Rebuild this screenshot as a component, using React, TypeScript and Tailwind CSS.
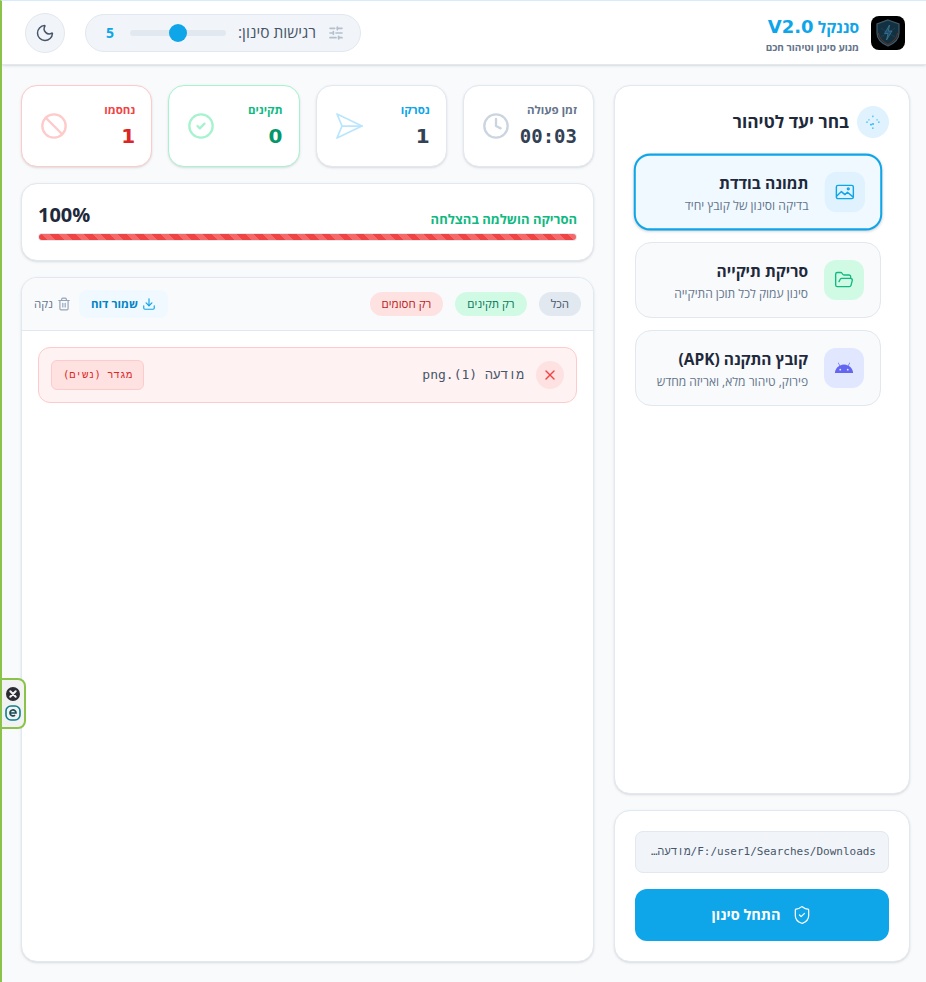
import React from "react";
import { Moon, SlidersHorizontal, FolderOpen, Clock, CircleCheck, Ban, Download, Trash2, X, ShieldCheck } from "lucide-react";

function Sparkle() {
  return (
    <svg width="16" height="16" viewBox="0 0 16 16" fill="#38bdf8">
      <rect x="7" y="1.6" width="1.6" height="1.6" opacity=".8" />
      <rect x="3" y="5.4" width="1.8" height="1" opacity=".8" />
      <rect x="11.2" y="5.4" width="1.8" height="1" opacity=".8" />
      <rect x="1.2" y="7.4" width="1.6" height="1.6" opacity=".8" />
      <rect x="13" y="7.4" width="1.6" height="1.6" opacity=".8" />
      <rect x="5" y="9.8" width="2" height="1.6" />
      <rect x="7" y="9.2" width="2" height="1.6" />
      <rect x="7" y="13.4" width="1.6" height="1.6" opacity=".8" />
    </svg>
  );
}

function Landscape() {
  return (
    <svg width="20" height="20" viewBox="0 0 20 20" fill="none" stroke="#0ea5e9" strokeWidth="1.4" strokeLinejoin="round" strokeLinecap="round">
      <rect x="1.6" y="3.4" width="16.8" height="13.2" rx="1.6" />
      <path d="M2 14l4.6-4.4 3.4 3 2.6-2.4 5.4 4.6" />
      <circle cx="13.4" cy="6.8" r="0.9" />
    </svg>
  );
}

function Android() {
  return (
    <svg width="20" height="20" viewBox="0 0 24 24" fill="#6366f1">
      <path d="M1 18a11 11 0 0 1 5.6-8.6L4.7 6.1a.4.4 0 0 1 .7-.4l1.9 3.3a11.4 11.4 0 0 1 9.4 0l1.9-3.3a.4.4 0 0 1 .7.4l-1.9 3.3A11 11 0 0 1 23 18H1z" />
      <circle cx="7.5" cy="14" r="1.1" fill="#e0e7ff" />
      <circle cx="16.5" cy="14" r="1.1" fill="#e0e7ff" />
    </svg>
  );
}

function Plane() {
  return (
    <svg width="28" height="28" viewBox="0 0 28 28" fill="none" stroke="#bae6fd" strokeWidth="1.75" strokeLinejoin="round" strokeLinecap="round">
      <path d="M2 2 L27 14 L2 26 L7 14 Z" />
      <path d="M7 14 H27" />
    </svg>
  );
}

function Logo() {
  return (
    <div className="w-[34px] h-[34px] rounded-lg bg-black flex items-center justify-center shrink-0">
      <svg width="26" height="28" viewBox="0 0 26 28">
        <path d="M13 1 L24 5 V14 C24 20 19 24.5 13 27 C7 24.5 2 20 2 14 V5 Z" fill="#12303f" stroke="#3d5a6c" strokeWidth="1.2" />
        <path d="M3.5 14 C4 19 8 23 13 25.5 C18 23 22 19 22.5 14" fill="none" stroke="#6b3526" strokeWidth="1" />
        <path d="M6 9l5 4M20 9l-5 4M6 18l5-3M20 18l-5-3" stroke="#24495c" strokeWidth=".6" fill="none" />
        <path d="M14.5 6 L9.5 14.5 H13 L11.5 21 L17 12 H13.5 Z" fill="#1d4f6e" stroke="#4a87a8" strokeWidth=".6" />
      </svg>
    </div>
  );
}

function Stat({ label, value, labelCls, valueCls, border, icon }: { label: string; value: React.ReactNode; labelCls: string; valueCls: string; border: string; icon: React.ReactNode }) {
  return (
    <div className={`flex-1 min-w-0 h-[82px] bg-white rounded-2xl border ${border} shadow-sm pr-4 pl-[18px] flex items-center justify-between`}>
      <div className="flex flex-col items-start">
        <div className={`text-[11.5px] font-bold leading-4 ${labelCls}`}>{label}</div>
        <div className={`font-bold leading-7 mt-1 ${valueCls}`}>{value}</div>
      </div>
      {icon}
    </div>
  );
}

function Mode({ title, desc, iconBg, icon, active }: { title: string; desc: string; iconBg: string; icon: React.ReactNode; active?: boolean }) {
  return (
    <div className={`h-[76px] rounded-2xl flex items-center gap-4 ${active ? "border-2 border-[#0ea5e9] bg-[#f0f9ff] shadow-sm scale-[1.01] px-[15px]" : "border border-[#e2e8f0] bg-[#f8fafc] px-4"}`}>
      <div className={`w-10 h-10 rounded-xl flex items-center justify-center shrink-0 ${iconBg}`}>{icon}</div>
      <div className="min-w-0">
        <div className="text-[15.5px] font-bold leading-[26px] text-[#1e293b]">{title}</div>
        <div className="text-xs leading-4 mt-0.5 text-[#64748b] whitespace-nowrap">{desc}</div>
      </div>
    </div>
  );
}

const mono = "font-['DejaVu_Sans_Mono','Liberation_Mono',monospace]";
const dejavu = "font-['DejaVu_Sans',sans-serif]";

export default function App() {
  return (
    <div dir="rtl" className="relative w-[926px] h-[982px] overflow-hidden bg-[#f8fafc] border-l-2 border-l-[#8bc34a] border-t border-t-[#d7ecfa] font-['Open_Sans','Liberation_Sans',sans-serif] flex flex-col">
      <header className="h-[64px] shrink-0 bg-white border-b border-[#e2e8f0] shadow-sm flex items-center justify-between pr-[21px] pl-[23px]">
        <div className="flex items-center gap-3">
          <Logo />
          <div>
            <div className="leading-[26px] text-[#0ea5e9] whitespace-nowrap">
              <span className="text-[15.5px] font-bold">סננקל</span> <span className={`text-lg font-bold ${dejavu}`}>V2.0</span>
            </div>
            <div className="text-[10px] font-bold leading-3 text-[#64748b]">מנוע סינון וטיהור חכם</div>
          </div>
        </div>
        <div className="flex items-center gap-5">
          <div className="w-[276px] h-[38px] rounded-full bg-[#f1f5f9] border border-[#e2e8f0] flex items-center pr-[16px] pl-[20px]">
            <SlidersHorizontal size={16} strokeWidth={2.5} className="text-[#b4bfce] shrink-0" />
            <span className="text-[15.5px] font-medium text-[#475569] mr-3">רגישות סינון:</span>
            <div className="w-24 h-1.5 rounded-full bg-[#e2e8f0] mr-[12px] relative shrink-0">
              <div className="absolute left-[39px] -top-1.5 w-[18px] h-[18px] rounded-full bg-[#0ea5e9]" />
            </div>
            <span className="text-sm font-bold text-[#0ea5e9] mr-auto">5</span>
          </div>
          <button className="w-10 h-10 rounded-full bg-[#f1f5f9] border border-[#e2e8f0] flex items-center justify-center">
            <Moon size={20} strokeWidth={1.75} className="text-[#475569]" />
          </button>
        </div>
      </header>

      <main className="flex-1 min-h-0 flex gap-5 pt-5 pb-5 pr-4 pl-[19px]">
        <aside className="w-[296px] shrink-0 flex flex-col gap-4">
          <section className="flex-1 bg-white rounded-2xl border border-[#e2e8f0] shadow-sm pt-5 px-5">
            <div className="flex items-center gap-2 h-8">
              <div className="w-8 h-8 rounded-full bg-[#e0f2fe] flex items-center justify-center"><Sparkle /></div>
              <h2 className="text-[17.3px] font-bold text-[#1e293b]">בחר יעד לטיהור</h2>
            </div>
            <div className="flex flex-col gap-3 mt-4 pr-2">
              <Mode active title="תמונה בודדת" desc="בדיקה וסינון של קובץ יחיד" iconBg="bg-[#e0f2fe]" icon={<Landscape />} />
              <Mode title="סריקת תיקייה" desc="סינון עמוק לכל תוכן התיקייה" iconBg="bg-[#d1fae5]" icon={<FolderOpen size={20} strokeWidth={1.6} className="text-[#10b981]" />} />
              <Mode title="קובץ התקנה (APK)" desc="פירוק, טיהור מלא, ואריזה מחדש" iconBg="bg-[#e0e7ff]" icon={<Android />} />
            </div>
          </section>
          <section className="h-[152px] shrink-0 bg-white rounded-2xl border border-[#e2e8f0] shadow-sm p-5 flex flex-col gap-4">
            <div dir="ltr" className={`h-[42px] rounded-lg bg-[#f1f5f9] border border-[#e2e8f0] flex items-center justify-end px-3 text-[11px] text-[#475569] whitespace-nowrap overflow-hidden ${mono}`}>
              <span>…מודעה/F:/user1/Searches/Downloads</span>
            </div>
            <button className="h-[52px] rounded-xl bg-[#0ea5e9] text-white font-bold text-[14.5px] flex items-center justify-center gap-3">
              <ShieldCheck size={20} strokeWidth={1.5} />
              <span>התחל סינון</span>
            </button>
          </section>
        </aside>

        <div className="flex-1 min-w-0 flex flex-col gap-4">
          <div className="flex gap-4">
            <Stat label="זמן פעולה" value={<span className={`text-[19px] ${mono}`}>00:03</span>} labelCls="text-[#64748b]" valueCls="text-[#334155]" border="border-[#e2e8f0]" icon={<Clock size={28} className="text-[#cbd5e1]" />} />
            <Stat label="נסרקו" value={<span className={`text-xl ${dejavu}`}>1</span>} labelCls="text-[#0ea5e9]" valueCls="text-[#334155]" border="border-[#e2e8f0]" icon={<Plane />} />
            <Stat label="תקינים" value={<span className={`text-xl ${dejavu}`}>0</span>} labelCls="text-[#10b981]" valueCls="text-[#059669]" border="border-[#a7f3d0]" icon={<CircleCheck size={28} className="text-[#a7f3d0]" />} />
            <Stat label="נחסמו" value={<span className={`text-xl ${dejavu}`}>1</span>} labelCls="text-[#ef4444]" valueCls="text-[#dc2626]" border="border-[#fecaca]" icon={<Ban size={28} className="text-[#fecaca]" />} />
          </div>

          <section className="h-[78px] shrink-0 bg-white rounded-2xl border border-[#e2e8f0] shadow-sm px-4 pt-[17px]">
            <div className="flex items-end justify-between h-7">
              <span className="text-[13px] font-bold leading-5 text-[#10b981]">הסריקה הושלמה בהצלחה</span>
              <span dir="ltr" className="text-xl font-bold leading-7 text-[#1e293b]">100%</span>
            </div>
            <div className="h-2 mt-1 p-px rounded-full bg-[#e2e8f0] overflow-hidden">
              <div className="h-full rounded-full bg-[#ef4444] bg-[repeating-linear-gradient(45deg,#ef4444_0,#ef4444_6px,#f46a6a_6px,#f46a6a_12px)]" />
            </div>
          </section>

          <section className="flex-1 min-h-0 bg-white rounded-2xl border border-[#e2e8f0] shadow-sm overflow-hidden flex flex-col">
            <div className="h-[53px] shrink-0 bg-[#f8fafc] border-b border-[#e2e8f0] flex items-center justify-between px-3">
              <div className="flex items-center gap-3">
                <span className="h-6 px-3 rounded-full bg-[#e2e8f0] text-[#475569] text-[11.5px] font-medium flex items-center">הכל</span>
                <span className="h-6 px-3 rounded-full bg-[#d1fae5] text-[#047857] text-[11.5px] font-medium flex items-center">רק תקינים</span>
                <span className="h-6 px-3 rounded-full bg-[#fee2e2] text-[#b91c1c] text-[11.5px] font-medium flex items-center">רק חסומים</span>
              </div>
              <div className="flex items-center gap-2">
                <span className="h-7 px-3 rounded-lg bg-[#f0f9ff] text-[#0284c7] text-[11.5px] font-bold flex items-center gap-1">
                  <Download size={14} className="text-[#0ea5e9]" />שמור דוח
                </span>
                <span className="text-[#64748b] text-[11.5px] flex items-center gap-1">
                  <Trash2 size={14} className="text-[#94a3b8]" />נקה
                </span>
              </div>
            </div>
            <div className="flex-1 p-4">
              <div className="h-14 rounded-xl bg-[#fef2f2] border border-[#fecaca] flex items-center justify-between px-3">
                <div className="flex items-center gap-3">
                  <div className="w-7 h-7 rounded-full bg-[#fee2e2] flex items-center justify-center">
                    <X size={16} className="text-[#ef4444]" />
                  </div>
                  <span className={`text-[13px] text-[#475569] ${mono}`}>מודעה (1).png</span>
                </div>
                <span className={`h-[30px] px-[11px] rounded-md bg-[#fee2e2] border border-[#fecaca] text-[#dc2626] text-[10.5px] flex items-center ${mono}`}>מגדר (נשים)</span>
              </div>
            </div>
          </section>
        </div>
      </main>

      <div dir="ltr" className="absolute left-[-2px] top-[677px] w-[26px] h-[51px] rounded-r-lg border-2 border-[#8bc34a] bg-[#f2f2f2] flex flex-col items-center justify-center gap-1">
        <svg width="14" height="14" viewBox="0 0 14 14"><circle cx="7" cy="7" r="7" fill="#2b2b33" /><path d="M4.3 4.3l5.4 5.4M9.7 4.3l-5.4 5.4" stroke="#f2f2f2" strokeWidth="2" strokeLinecap="round" /></svg>
        <svg width="16" height="16" viewBox="0 0 16 16"><rect x="1" y="1" width="14" height="14" rx="5" fill="none" stroke="#0d7f8c" strokeWidth="1.6" /><path d="M5 8h6a3 3 0 1 0-1 2.2" fill="none" stroke="#1a4a52" strokeWidth="1.7" /></svg>
      </div>
    </div>
  );
}
